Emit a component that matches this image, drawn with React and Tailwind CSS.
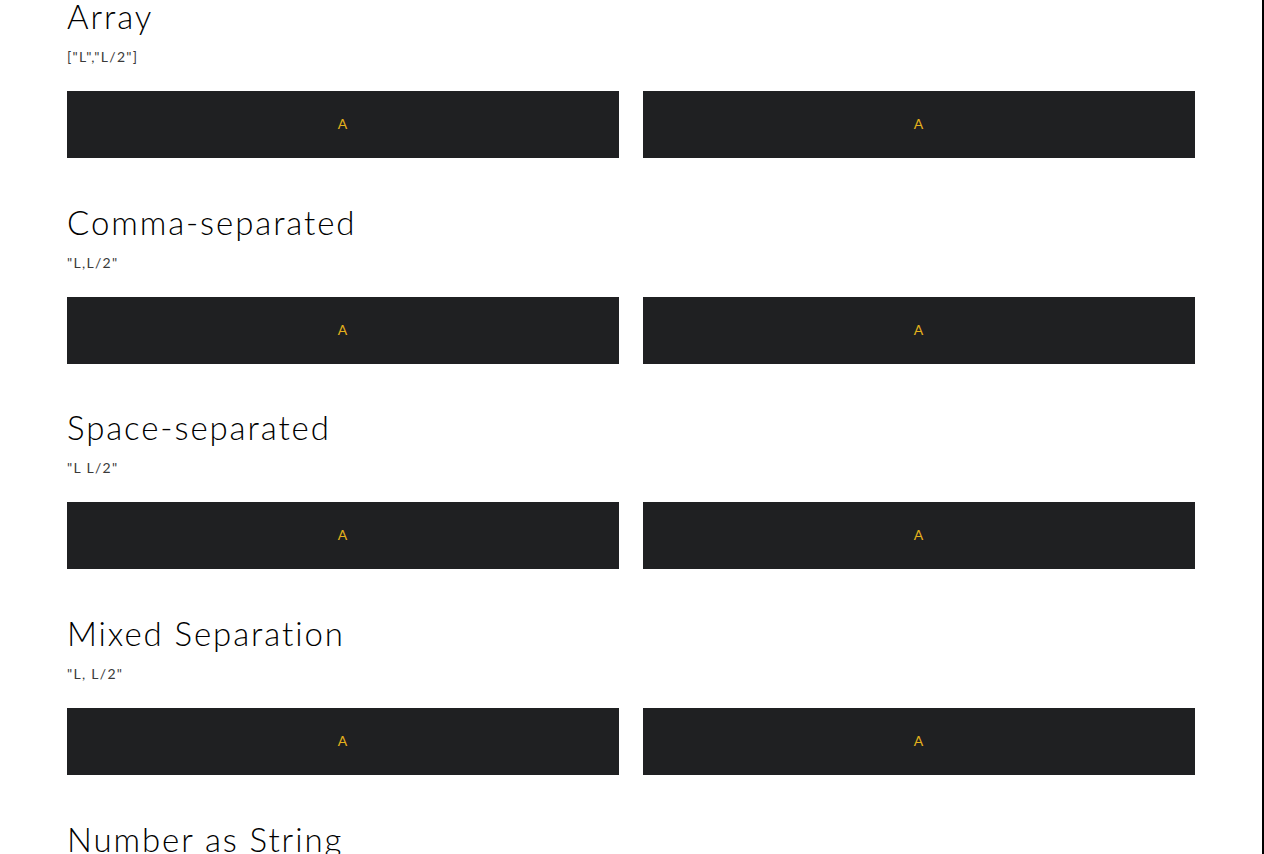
import React from "react";

const sections = [
  { title: "Array", code: '["L","L/2"]' },
  { title: "Comma-separated", code: '"L,L/2"' },
  { title: "Space-separated", code: '"L L/2"' },
  { title: "Mixed Separation", code: '"L, L/2"' },
  { title: "Number as String", code: '"20"' },
];

function Box() {
  return (
    <div className="h-[67px] bg-[#1f2022] flex items-center justify-center text-[14px] leading-[20px] text-[#e3b11c] tracking-[1px] pb-[1px]">
      A
    </div>
  );
}

export default function App() {
  return (
    <div className="flex h-[854px] overflow-hidden bg-white" style={{ fontFamily: "Lato, 'Noto Sans', sans-serif" }}>
      <div className="flex-1 min-w-0">
        <div className="w-[1128px] mx-auto">
          {sections.map((s) => (
            <section key={s.title} className="mb-[47.67px]">
              <h2 className="text-[33px] leading-[32px] font-light text-black tracking-[1.9px]">{s.title}</h2>
              <div className="mt-[15px] text-[14px] leading-[20px] text-[#3a3a3a] tracking-[1.3px]">{s.code}</div>
              <div className="mt-6 grid grid-cols-2 gap-6">
                <Box />
                <Box />
              </div>
            </section>
          ))}
        </div>
      </div>
      <div className="w-[2px] bg-black shrink-0" />
    </div>
  );
}
